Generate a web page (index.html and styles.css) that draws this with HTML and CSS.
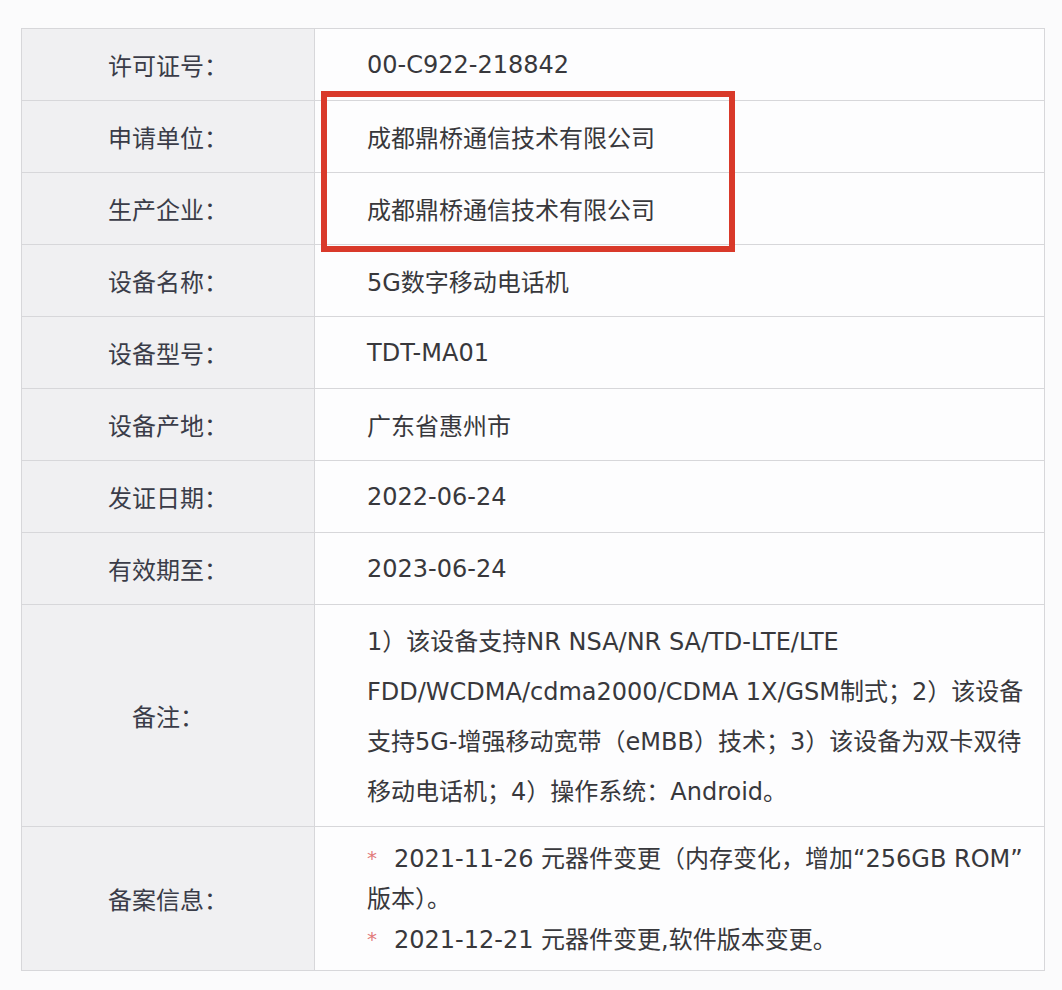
FILE: index.html
```html
<!DOCTYPE html>
<html lang="zh-CN">
<head>
<meta charset="utf-8">
<title>设备进网许可信息</title>
<link rel="stylesheet" href="styles.css">
</head>
<body>
<div class="sheet">
  <div class="grid">
    <div class="label">许可证号：</div>
    <div class="value">00-C922-218842</div>
    <div class="label">申请单位：</div>
    <div class="value">成都鼎桥通信技术有限公司</div>
    <div class="label">生产企业：</div>
    <div class="value">成都鼎桥通信技术有限公司</div>
    <div class="label">设备名称：</div>
    <div class="value">5G数字移动电话机</div>
    <div class="label">设备型号：</div>
    <div class="value">TDT-MA01</div>
    <div class="label">设备产地：</div>
    <div class="value">广东省惠州市</div>
    <div class="label">发证日期：</div>
    <div class="value">2022-06-24</div>
    <div class="label">有效期至：</div>
    <div class="value">2023-06-24</div>
    <div class="label">备注：</div>
    <div class="value remarks">1）该设备支持NR NSA/NR SA/TD-LTE/LTE<br>FDD/WCDMA/cdma2000/CDMA 1X/GSM制式；2）该设备<br>支持5G-增强移动宽带（eMBB）技术；3）该设备为双卡双待<br>移动电话机；4）操作系统：Android。</div>
    <div class="label">备案信息：</div>
    <div class="value records">
      <div class="rec"><span class="star">*</span>2021-11-26 元器件变更（内存变化，增加“256GB ROM”<br>版本）。</div>
      <div class="rec"><span class="star">*</span>2021-12-21 元器件变更,软件版本变更。</div>
    </div>
  </div>
  <div class="highlight"></div>
</div>
</body>
</html>
```

FILE: styles.css
```css
body {
  margin: 0;
  background: #fbfbfc;
  font-family: "Liberation Sans", "Noto Sans CJK SC", sans-serif;
}

.sheet {
  position: relative;
  width: 1024px;
  margin: 28px 0 0 21px;
}

.grid {
  display: grid;
  grid-template-columns: 292px 729px;
  gap: 1px;
  padding: 1px;
  background: #d7d7da;
}

.label {
  background: #f0f0f2;
  color: #3a3c48;
  font-size: 24px;
  display: flex;
  align-items: center;
  justify-content: center;
  min-height: 71px;
}

.value {
  background: #fdfdfe;
  color: #38383c;
  font-family: "DejaVu Sans", "Noto Sans CJK SC", sans-serif;
  font-size: 24px;
  display: flex;
  align-items: center;
  padding-left: 52px;
  min-height: 71px;
  white-space: nowrap;
}

.value.remarks {
  display: block;
  line-height: 50px;
  padding-top: 12px;
  padding-bottom: 9px;
}

.value.records {
  display: block;
  line-height: 40px;
  padding-top: 11px;
  padding-bottom: 10px;
}

.star {
  color: #e27a7a;
  font-size: 20px;
  vertical-align: 2px;
  margin-right: 17px;
}

.highlight {
  position: absolute;
  left: 300px;
  top: 63px;
  width: 414px;
  height: 161px;
  box-sizing: border-box;
  border: 6px solid #d9392a;
}
```
